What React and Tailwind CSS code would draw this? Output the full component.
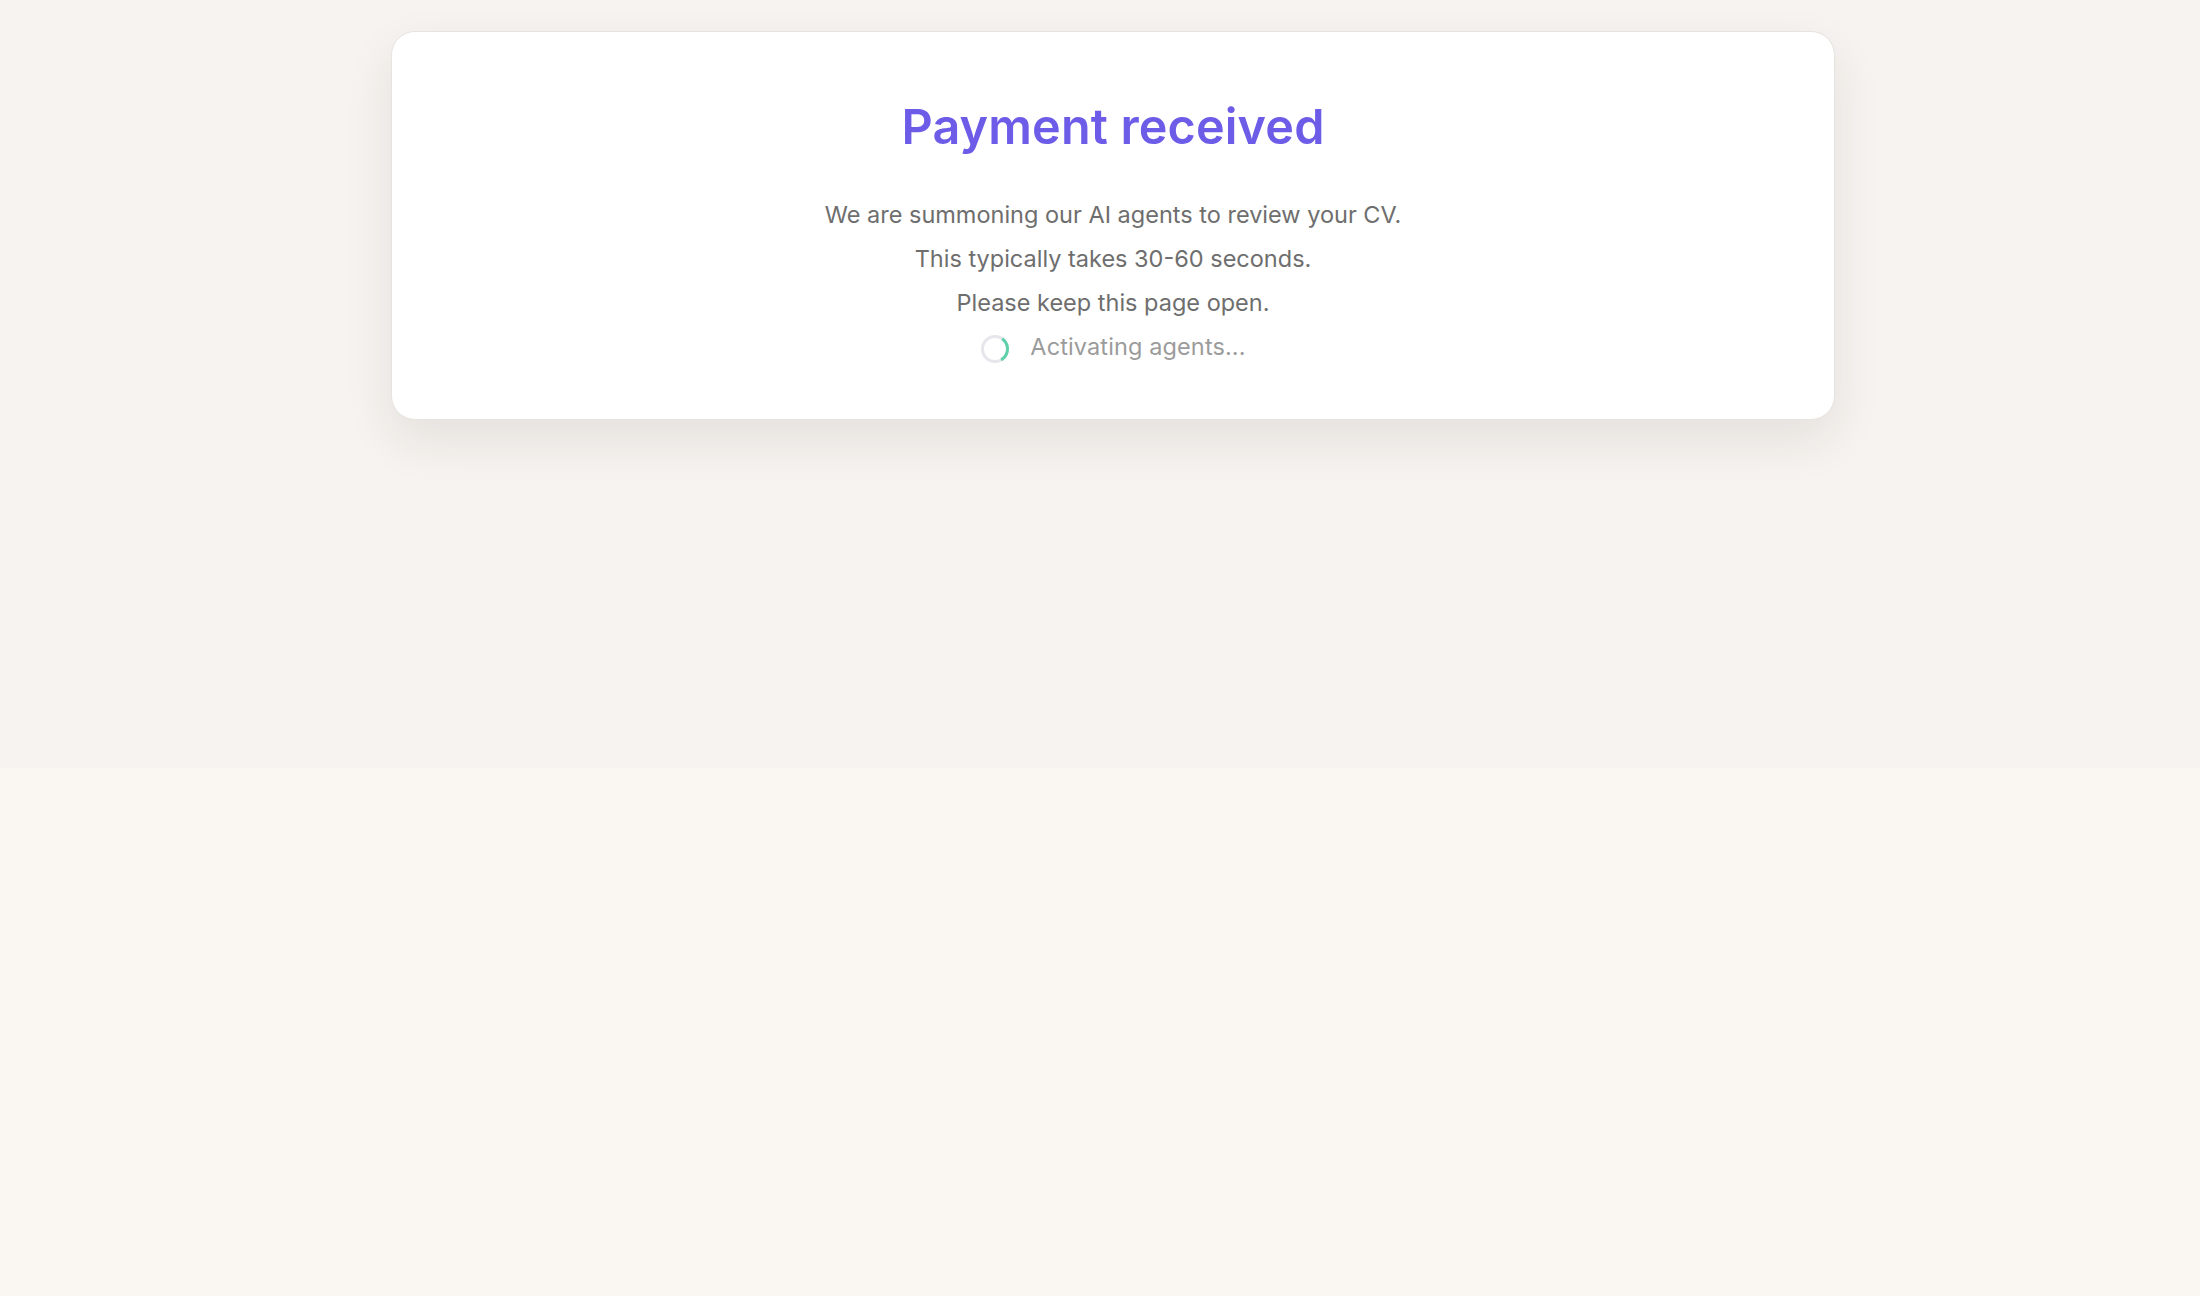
import React from 'react';

const Spinner = () => (
  <svg width="30" height="30" viewBox="0 0 30 30" className="shrink-0 mt-[4px]">
    <circle cx="15" cy="15" r="12.5" fill="none" stroke="#e6e6ec" strokeWidth="3" />
    <circle
      cx="15"
      cy="15"
      r="12.5"
      fill="none"
      stroke="#5fd0aa"
      strokeWidth="3"
      strokeDasharray="25 100"
      transform="rotate(-55 15 15)"
    />
  </svg>
);

const App = () => {
  return (
    <div className="min-h-screen bg-[#faf7f3] font-['Inter',_'Liberation_Sans',_sans-serif]">
      <div className="h-[768px] bg-[#f6f3f0] pt-[31px] pl-[26px] flex justify-center items-start">
        <div className="w-[1444px] bg-white border border-[#e7e4df] rounded-[24px] shadow-[0_20px_50px_rgba(60,45,30,0.09)] pt-[71px] pb-[50px] flex flex-col items-center">
          <h1 className="text-[48.5px] leading-none font-semibold text-[#6c5ce7] tracking-[0.003em]">
            Payment received
          </h1>

          <div className="mt-[41px] flex flex-col items-center text-[23.5px] leading-[44px] text-[#6e6e6e]">
            <p>We are summoning our AI agents to review your CV.</p>
            <p>This typically takes 30-60 seconds.</p>
            <p>Please keep this page open.</p>
            <div className="flex items-center gap-[20px] text-[#9b9b9b] tracking-[0.005em]">
              <Spinner />
              <span>Activating agents...</span>
            </div>
          </div>
        </div>
      </div>
    </div>
  );
};

export default App;
